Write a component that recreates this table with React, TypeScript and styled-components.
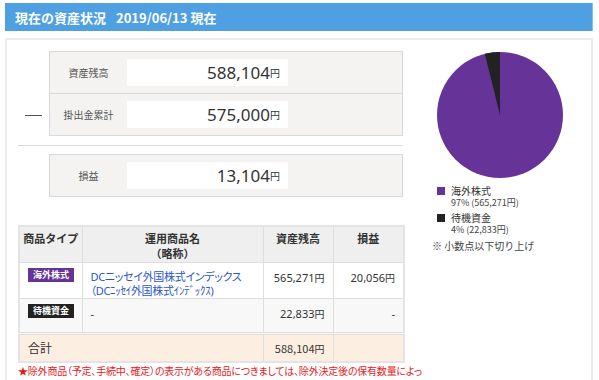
import styled, { createGlobalStyle } from 'styled-components'

const GlobalStyle = createGlobalStyle`
  body {
    margin: 0;
    background: #fff;
    font-family: "Noto Sans CJK JP", "Noto Sans", sans-serif;
    color: #333;
  }
`

const Page = styled.div`
  width: 599px;
  height: 380px;
  overflow: hidden;
  padding: 3px 6px 0 5px;
  box-sizing: border-box;
`

const Header = styled.div`
  height: 28px;
  background: #4fa0e3;
  border-right: 1px solid #7fc0f5;
  color: #fff;
  font-size: 13px;
  font-weight: bold;
  display: flex;
  align-items: center;
  padding-left: 10px;
  gap: 10px;
`

const Panel = styled.div`
  margin-top: 7px;
  border: 2px solid #ececec;
  border-bottom: none;
  height: 400px;
  display: flex;
  padding: 11px 0 0 11px;
  box-sizing: border-box;
`

const LeftCol = styled.div`
  width: 385px;
  flex: none;
`

const RightCol = styled.div`
  padding-left: 29px;
  padding-top: 1px;
`

const SumRow = styled.div`
  display: flex;
  align-items: center;
`

const Sign = styled.div<{ $hidden?: boolean }>`
  width: 31px;
  display: flex;
  justify-content: center;
  padding-top: 43px;
  &::before {
    content: '';
    display: ${p => (p.$hidden ? 'none' : 'block')};
    width: 17px;
    height: 1px;
    background: #555;
  }
`

const SumBox = styled.div`
  width: 354px;
  border: 1px solid #d9d9d9;
  background: #f4f3f1;
  box-sizing: border-box;
`

const SumLine = styled.div`
  display: flex;
  align-items: center;
  height: 41px;
  & + & {
    border-top: 1px solid #d9d9d9;
  }
`

const SumLabel = styled.div`
  width: 77px;
  text-align: center;
  font-size: 10px;
  color: #555;
`

const SumValue = styled.div`
  width: 161px;
  height: 27px;
  background: #fff;
  display: flex;
  align-items: center;
  justify-content: flex-end;
  padding-right: 8px;
  box-sizing: border-box;
  font-size: 17px;
  font-family: "Noto Sans", sans-serif;
  color: #333;
`

const Yen = styled.span`
  font-size: 10px;
  font-family: "Noto Sans CJK JP", sans-serif;
`

const Rule = styled.div`
  height: 1px;
  background: #dcdcdc;
  margin: 9px 0 8px;
`

const Table = styled.table`
  margin-top: 28px;
  width: 385px;
  border-collapse: collapse;
  border: 2px solid #e4e4e4;
  font-size: 11px;
  table-layout: fixed;
`

const Th = styled.th`
  background: #efefef;
  border: 1px solid #dedede;
  height: 36px;
  vertical-align: top;
  padding-top: 4px;
  box-sizing: border-box;
  font-weight: bold;
  color: #333;
  line-height: 15px;
`

const Tr = styled.tr<{ $bg?: string }>`
  background: ${p => p.$bg || '#fff'};
`

const Td = styled.td<{ $h?: number }>`
  border: 1px solid #dedede;
  vertical-align: top;
  padding: 5px 8px 0;
  height: ${p => p.$h || 34}px;
  box-sizing: border-box;
  font-family: "Noto Sans", "Noto Sans CJK JP", sans-serif;
  line-height: 13px;
`

const NumCell = styled(Td)`
  padding-top: 8px;
  text-align: right;
  color: #333;
`

const TotalCell = styled.td<{ $right?: boolean; $fs?: number }>`
  border: 1px solid #dedede;
  border-top: 3px double #dedede;
  height: 28px;
  box-sizing: border-box;
  padding: 0 8px;
  text-align: ${p => (p.$right ? 'right' : 'left')};
  font-size: ${p => p.$fs || 11}px;
`

const Badge = styled.div<{ $color: string }>`
  background: ${p => p.$color};
  color: #fff;
  font-size: 9px;
  font-weight: bold;
  width: 46px;
  height: 14px;
  line-height: 14px;
  text-align: center;
  margin: 0 auto;
`

const FundLink = styled.a`
  color: #2b56c6;
  font-size: 11px;
  line-height: 14px;
  text-decoration: none;
  display: block;
  white-space: nowrap;
  font-feature-settings: "palt";
  letter-spacing: -0.3px;
  padding-top: 2px;
`

const Note = styled.div`
  color: #e8181b;
  font-size: 10px;
  line-height: 15px;
  white-space: nowrap;
  font-feature-settings: "palt";
  letter-spacing: -0.2px;
`

const Legend = styled.div`
  margin-top: 6px;
  display: flex;
  flex-direction: column;
  gap: 2px;
  margin-left: 5px;
`

const LegendItem = styled.div`
  display: flex;
  gap: 6px;
`

const Swatch = styled.div<{ $color: string }>`
  width: 8px;
  height: 8px;
  margin-top: 3px;
  background: ${p => p.$color};
`

const LegendName = styled.div`
  font-size: 10px;
  line-height: 13px;
  color: #333;
`

const LegendSub = styled.div`
  font-size: 9px;
  line-height: 12px;
  color: #444;
`

const Footnote = styled.div`
  font-size: 10px;
  color: #444;
  margin-top: 2px;
`

function Pie() {
  const r = 63
  const a = (22833 / 588104) * Math.PI * 2
  const x = r - r * Math.sin(a)
  const y = r - r * Math.cos(a)
  return (
    <svg width={126} height={126} viewBox="0 0 126 126" style={{ display: 'block', marginLeft: 5 }}>
      <circle cx={r} cy={r} r={r} fill="#663399" />
      <path d={`M${r},${r} L${r},0 A${r},${r} 0 0 0 ${x},${y} Z`} fill="#222" />
    </svg>
  )
}

export default function App() {
  return (
    <>
      <GlobalStyle />
      <Page>
        <Header>
          <span>現在の資産状況</span>
          <span>2019/06/13 現在</span>
        </Header>
        <Panel>
          <LeftCol>
            <SumRow>
              <Sign />
              <SumBox>
                <SumLine>
                  <SumLabel>資産残高</SumLabel>
                  <SumValue>588,104<Yen>円</Yen></SumValue>
                </SumLine>
                <SumLine>
                  <SumLabel>掛出金累計</SumLabel>
                  <SumValue>575,000<Yen>円</Yen></SumValue>
                </SumLine>
              </SumBox>
            </SumRow>
            <Rule />
            <SumRow>
              <Sign $hidden />
              <SumBox>
                <SumLine>
                  <SumLabel>損益</SumLabel>
                  <SumValue>13,104<Yen>円</Yen></SumValue>
                </SumLine>
              </SumBox>
            </SumRow>
            <Table>
              <colgroup>
                <col style={{ width: 63 }} />
                <col style={{ width: 181 }} />
                <col style={{ width: 70 }} />
                <col style={{ width: 71 }} />
              </colgroup>
              <thead>
                <tr>
                  <Th>商品タイプ</Th>
                  <Th>運用商品名<br />（略称）</Th>
                  <Th>資産残高</Th>
                  <Th>損益</Th>
                </tr>
              </thead>
              <tbody>
                <Tr>
                  <Td><Badge $color="#663399">海外株式</Badge></Td>
                  <Td>
                    <FundLink href="#">DCニッセイ外国株式インデックス<br />（DCﾆｯｾｲ外国株式ｲﾝﾃﾞｯｸｽ)</FundLink>
                  </Td>
                  <NumCell>565,271<Yen>円</Yen></NumCell>
                  <NumCell>20,056<Yen>円</Yen></NumCell>
                </Tr>
                <Tr $bg="#f8f8f8">
                  <Td $h={35}><Badge $color="#222">待機資金</Badge></Td>
                  <Td $h={35} style={{ paddingTop: 8 }}>-</Td>
                  <NumCell $h={35}>22,833<Yen>円</Yen></NumCell>
                  <NumCell $h={35}>-</NumCell>
                </Tr>
                <Tr $bg="#fcefe1">
                  <TotalCell colSpan={2} $fs={12}>合計</TotalCell>
                  <TotalCell $right>588,104<Yen>円</Yen></TotalCell>
                  <TotalCell />
                </Tr>
              </tbody>
            </Table>
            <Note>
              ★除外商品（予定、手続中、確定）の表示がある商品につきましては、除外決定後の保有数量によっ<br />
              て評価額が計算されますのでご注意ください。
            </Note>
          </LeftCol>
          <RightCol>
            <Pie />
            <Legend>
              <LegendItem>
                <Swatch $color="#663399" />
                <div>
                  <LegendName>海外株式</LegendName>
                  <LegendSub>97% (565,271円)</LegendSub>
                </div>
              </LegendItem>
              <LegendItem>
                <Swatch $color="#222" />
                <div>
                  <LegendName>待機資金</LegendName>
                  <LegendSub>4% (22,833円)</LegendSub>
                </div>
              </LegendItem>
            </Legend>
            <Footnote>※ 小数点以下切り上げ</Footnote>
          </RightCol>
        </Panel>
      </Page>
    </>
  )
}
